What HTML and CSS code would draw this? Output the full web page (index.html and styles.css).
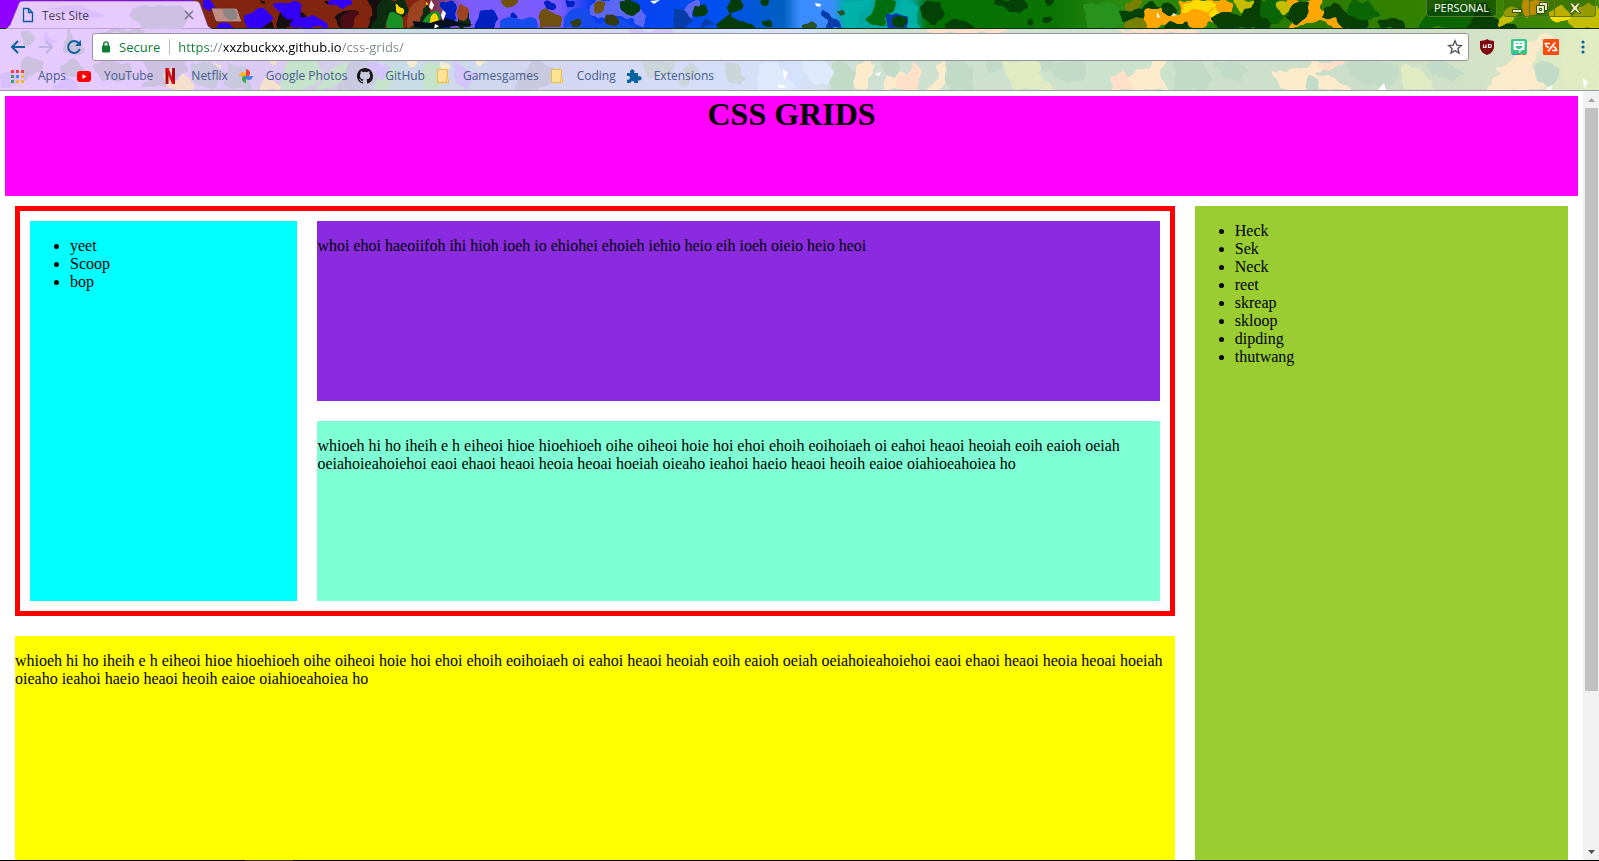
FILE: index.html
```
<!DOCTYPE html>
<html lang="en">
<head>
<meta charset="utf-8">
<title>Test Site</title>
<link rel="stylesheet" href="styles.css">
</head>
<body>
<div class="browser">
  <header class="chrome">
    <div class="titlebar">
      <svg class="art" viewBox="0 0 1599 29" preserveAspectRatio="none" aria-hidden="true">
        <defs>
          <filter id="splat" x="-5%" y="-20%" width="110%" height="140%" color-interpolation-filters="sRGB">
            <feTurbulence type="fractalNoise" baseFrequency="0.09" numOctaves="2" seed="4" result="noise"/>
            <feDisplacementMap in="SourceGraphic" in2="noise" scale="9" xChannelSelector="R" yChannelSelector="G"/>
            <feGaussianBlur stdDeviation="1.2"/>
            <feComponentTransfer><feFuncA type="linear" slope="5" intercept="-2"/></feComponentTransfer>
          </filter>
          <linearGradient id="sky"><stop offset="0" stop-color="#8f00ff"/><stop offset="0.12" stop-color="#8f00ff"/><stop offset="0.121" stop-color="#82250f"/><stop offset="0.265" stop-color="#82250f"/><stop offset="0.29" stop-color="#7a5cff"/><stop offset="0.35" stop-color="#7a5cff"/><stop offset="0.37" stop-color="#0a3cf0"/><stop offset="0.45" stop-color="#0050f0"/><stop offset="0.49" stop-color="#0060c0"/><stop offset="0.5" stop-color="#3b8cff"/><stop offset="0.52" stop-color="#3b8cff"/><stop offset="0.53" stop-color="#00a8a0"/><stop offset="0.57" stop-color="#00a8a0"/><stop offset="0.58" stop-color="#037003"/><stop offset="0.66" stop-color="#0b7503"/><stop offset="0.7" stop-color="#2c8a10"/><stop offset="0.8" stop-color="#2a7a00"/><stop offset="1" stop-color="#3f8a00"/></linearGradient>
        </defs>
        <rect width="1599" height="29" fill="url(#sky)"/>
        <g fill="#16100e">
          <path d="M257 0q8 0 9 4-4 3-9-4zM262 20q4 2 12 3 0 6-2 6h-8zM277 24q0-12 20-14 10 0 12 8l-9 11h-22zM337 13q8-4 24-2l-4 6q-10 0-8 12h-9q-4-8-3-16zM322 0h20v5q-12 4-20-5zM366 0h28l3 9-8 4-6 16h-16l4-14z"/>
        </g>
        <g fill="#3200f5">
          <path d="M203 0h8l5 6-6 6-6-5zM246 14q12-6 20-4l8 8-6 6-10 5h-12q-2-8 0-15zM273 4q8-2 18-1 8-3 10 4l-1 10-14 1-9-7zM327 0h22l5 4-10 4-14-2zM288 29q4-12 16-14 22 0 24 14zM216 25l8-3 10 7h-16z"/>
        </g>
        <g fill="#4a0d16"><path d="M341 17q8-8 18-6l2 6q-8 0-9 12h-9q-4-6-2-12z"/></g>
        <g fill="#0d2d10"><path d="M377 6q6-8 14-6h13l5 9-8 9-15-1-2 12h-16l8-9zM404 29l6-13 16-12 7 25zM459 15l10-4 3 18h-12z"/></g>
        <g fill="#199024"><path d="M385 20q3-12 12-7l7 16h-18zM426 13l14-2-4 18h-13z"/></g>
        <g fill="#ffd300"><path d="M397 2l6 6-3 9-3-5zM429 15l7-1 2 9-6 3zM423 0h4l3 7-6-3z"/></g>
        <g fill="#9d4320"><path d="M407 11l11-11h10l-5 9-5 18-12 2zM459 4l11 4-4 13-8-5z"/></g>
        <g fill="#0020c0"><path d="M442 4l10-4 5 12-7 17h-10l5-15zM480 11l10-2 8 9-6 12h-18zM544 4l4-4 7 2 1 7-10 1zM565 0h10l-2 8-8-1zM510 12q8-3 8 5-5 8-10 3z"/></g>
        <g fill="#174cec"><path d="M500 29q-2-18 10-14l12 6 14-4v12zM565 17q14-15 27-3l9 15h-38zM595 29q10-15 32-8l12 8z"/></g>
        <g fill="#5b68f5"><path d="M595 0h33l8 10 14 5-10 14-8-11-16-3-18 5-8-10zM684 8l15-8 2 6-8 7-8 15z"/></g>
        <g fill="#70500f"><path d="M501 0h19q-3 8-11 8-7-1-8-8zM540 9q8-1 13 4l9 4-1 12h-22q-2-8 1-20zM594 2l12-2-3 12-7 2z"/></g>
        <g fill="#353c14"><path d="M606 15l8-2q5 3 3 12l-6 2-7-6zM569 22l12-3-2 6-8 4z"/></g>
        <g fill="#053c0b"><path d="M619 3l8-3 10 3q4 12-4 13l-14-7zM695 9l10-4q4 6 0 11l-12 1zM729 0h13q4 14-11 12l1 9q22-1 24 8h-36l-5-5 14-10-4-7zM762 0h7q1 8-6 8zM763 22l6-2 3 6-5 1z"/></g>
        <g fill="#063da8"><path d="M672 9l13-1 7 13-10 8h-10zM705 18l10 4-14 7zM822 9l14 10 7 10h-23l9-8-8-6zM886 14l17-5 6 11-1 9h-22z"/></g>
        <g fill="#295226"><path d="M802 24l8-3 8 4-3 4h-12zM835 11l7-3q6 8-1 10z"/></g>
        <g fill="#00b1a9"><path d="M841 4l14-4h18l-6 10-8 6-3 13h-11l-4-11 5-4zM904 0l15 7-2 12 4 10h-12l-3-14-13-6z"/></g>
        <g fill="#006e0e"><path d="M865 20l5-7 6-13h23l-6 8-7 9-3 11z"/></g>
        <g fill="#27921c"><path d="M1085 4l24-4 12 10 3 14-13 5h-21l-5-12z"/></g>
        <g fill="#034207"><path d="M921 6q8-7 20-1l3 8-8 12q-17-3-15-19zM894 15l8-1 6 8-6 7-9-5zM945 23l7-5 15 4 9 7h-31zM995 0h33q4 9-11 13-10 0-12-5l-10-2zM1044 0h10l-1 6-8 1zM1042 16l8-2 4 6-5 4-7-2zM1026 23l5-4 4 4-3 4zM1117 11l24-1 9-10 14 8-9 13-14 4-20-4z"/></g>
        <g fill="#788000"><path d="M1126 3l6-3h12l-6 11-12-1zM1124 20l22-3 8 12h-30z"/></g>
        <g fill="#ffa600"><path d="M1144 10l17-4 9 8 14 1-6 14-15-5-17 5zM1178 0h44l12 6-9 14-18 2-7 7-22-7 4-9zM1287 0h37l-4 10 17 4 6 9 9 6h-16l-12-9-21 5-14 2 5-13-9-9zM1522 0h28l-10 12-16 5z"/></g>
        <g fill="#ffdc00"><path d="M1183 3l21-3 13 5-11 7-12-4-10 6zM1209 14l7-6 5 8-7 5zM1547 11l15-7 10 13-16 6z"/></g>
        <g fill="#083f04"><path d="M1161 6l7-3 10 8-7 5-8-4zM1168 21l10 3 9-2 5 7h-30zM1211 19l10-7 17 3 10-8-8-7h35l2 14-10 15h-46zM1291 7l9-7h8l-1 17-10 8-12-8zM1325 10l12-6 15 14 10-9 9 13-7 7h-20l-9-11-14-1zM1377 21l19-4 9 7-2 5h-24zM1473 5l14-5 6 18 14 4 13 7h-55z"/></g>
        <g fill="#0a6504"><path d="M1260 0h18l12 13-12 12-15-6zM1352 0h17l10 15-18 7-14-7zM1427 11l25-11 22 11-7 18h-49z"/></g>
        <g fill="#c4bd00"><path d="M1276 4l7-4 7 10-8 7zM1231 0l9 12 10-5 5-7zM1498 17l14-12 8 3-7 13-14 8zM1566 20l21-18 12 2v25h-22z"/></g>
        <path d="M413 21l17 2 16-5 12 4 16 3-20 1-20 3-20-2z" fill="#08101f"/>
        <path d="M431 0l3 5-2 5-3-3zM443 10l3 3-3 8-2-6zM435 24l4 2-5 3zM815 3l6 1-1 3-4-1zM1157 12l3 5-3 1zM1173 13l4 2-5 1zM650 1l10-1-6 4z" fill="#fff"/>
        <path d="M0 28.500h1599" stroke="#10301c"/>
      </svg>
      <svg class="tab-shape" width="206" height="29" viewBox="0 0 206 29" aria-hidden="true"><path d="M0 29L4 25 13 3q1-2 4-2h173q3 0 4 3l8 22 4 3z" fill="#e7cbff" stroke="#6a3c94" stroke-opacity=".6"/><path d="M126 10q6-5 14-5 6 3 12 0 12 2 22 0 10 6 8 15l-6 9h-40q-2-8-10-10-4-4 0-9z" fill="#cdc0e2"/><path d="M42 9q20-5 34-3 14 6 24 10-10 3-18 2z" fill="#dcbfff"/></svg>
      <div class="tab">
        <svg width="16" height="16" viewBox="0 0 16 16" aria-hidden="true"><path d="M3.500 1.500h5l4 4v9h-9zM8.500 1.500v4h4" fill="none" stroke="#0b5c96" stroke-width="1.300"/></svg>
        <span class="tab-title">Test Site</span>
        <button class="tab-close" aria-label="Close tab"><svg width="10" height="10" viewBox="0 0 10 10"><path d="M1 1l8 8M9 1L1 9" stroke="#77708a" stroke-width="1.600"/></svg></button>
      </div>
      <button class="new-tab" aria-label="New tab"><svg width="34" height="17" viewBox="0 0 34 17"><path d="M1 1h24q2 0 3 2l4 12H8q-2 0-3-2z" fill="#bf8c86" stroke="#6b2415"/><path d="M13 2h11q4 4 3 9-5 4-9 1-6-4-5-10z" fill="#8c8583"/></svg></button>
      <div class="window-tools">
        <button class="profile">PERSONAL</button>
        <div class="window-buttons">
          <button aria-label="Minimize"><svg width="12" height="14" viewBox="0 0 12 14"><path d="M1.500 8.500h9v3h-9z" fill="#e4eec0" stroke="#384e16"/></svg></button>
          <button aria-label="Restore"><svg width="14" height="14" viewBox="0 0 14 14"><path d="M4.500 1.500h8v8h-3v3h-8v-8h3z" fill="#dfe9b7" stroke="#384e16"/><path d="M4.500 4.500h5v5M4.500 7.500h2v2h-2z" fill="none" stroke="#384e16"/></svg></button>
          <button class="wide" aria-label="Close"><svg width="14" height="14" viewBox="0 0 14 14"><path d="M1.500 2h3L7 5l2.500-3h3L9 7l3.500 5h-3L7 9l-2.500 3h-3L5 7z" fill="#eff3c4" stroke="#4a5a16"/></svg></button>
        </div>
      </div>
    </div>

    <div class="toolbar">
      <svg class="art" viewBox="0 29 1599 62" preserveAspectRatio="none" aria-hidden="true">
        <defs><linearGradient id="haze"><stop offset="0" stop-color="#e7cbff"/><stop offset="0.11" stop-color="#e2caff"/><stop offset="0.2" stop-color="#d6ccea"/><stop offset="0.25" stop-color="#c8dde6"/><stop offset="0.33" stop-color="#d4d5f2"/><stop offset="0.5" stop-color="#d5e2fb"/><stop offset="0.53" stop-color="#cfe1d4"/><stop offset="0.7" stop-color="#cde2cb"/><stop offset="0.85" stop-color="#cbdec8"/><stop offset="0.94" stop-color="#d5e3c6"/><stop offset="1" stop-color="#e2efc4"/></linearGradient></defs>
        <rect y="29" width="1599" height="62" fill="url(#haze)"/>
        <g fill="#cdc1e0"><path d="M20 31q10-4 14 6-1 12-10 9zM70 29q4 14 9 11l5 9-8 8-13-6 2-16zM25 58l20 2-4 11-14 9-9-9zM60 66l13-6 12 8-7 10-15-2zM93 65l15-4 22 4 3 13-17 7-15-5zM141 60h42l6 12-12 7-5 9h-32l11-11zM100 31l33-2 18 4H99z"/></g>
        <g fill="#dabfff"><path d="M0 74l15-2 6 9-12 8H0zM44 29l14 12-10 5zM57 84l12-7 13 13H50z"/></g>
        <g fill="#f5e1cb"><path d="M162 77l10-8 8 21h-12zM180 76l9 2 5 13h-20zM266 78l12 3 5 10h-25zM213 61l10 5-7 4zM267 60l12 2-5 5z"/></g>
        <g fill="#c9c9df"><path d="M190 62l28 2 7 12-11 15-20-7zM226 64l22 4 5 22h-28zM350 62h28l7 15-17 14h-32zM532 61l20 6 8 12-23 12h-25z"/></g>
        <g fill="#c5e3cb"><path d="M287 60h30l6 16-17 15h-25zM334 66l18-6-9 20-15 11h-13zM386 63l13 9-13 19h-13zM428 61l17 4-5 26h-14l-8-12z"/></g>
        <g fill="#f6ecd1"><path d="M406 60l11 1-7 8zM440 60l10 7-8 6zM471 61h15l-6 7z"/></g>
        <g fill="#d3c4fa"><path d="M300 29h24l8 7h-24zM372 61l20 7-7 12-20-9zM453 61l26 16-12 14-12-10zM630 30h42l8 4h-50z"/></g>
        <g fill="#ccd5da"><path d="M641 61h34l-6 16-12-2-9 5zM725 65q7-6 14 2l6 15-13 3q-10-8-7-20zM680 69l11-5 10 8-10 9zM677 81l11-4 3 8-9 6z"/></g>
        <g fill="#dfe9fd"><path d="M760 65h20l15 26h-37zM805 61h20l9 13-4 13-15-3-14-13z"/></g>
        <g fill="#fbebcb"><path d="M856 67l12-6 7 5-8 24h-12zM886 74l15-3 12 14-6 6h-21zM934 69l12-8 1 22-8 8h-12l11-12zM1134 73l10-4 12-8h10l-5 15 7 15h-32l-9-8zM1268 70l19 2 20-4 9-7 10 6-12 8 20 4 19 12h-71l-5-10zM1488 86l13-13-7-3 20-11 17-16 15-12 7 8-14 11-8 18 17 10-5 13h-55z"/></g>
        <g fill="#ffe0c8"><path d="M897 78l12-4 5-13 6 10-3 20h-18zM1109 78l16-7 9 20h-20zM1317 65l21-5 7 3-15 9zM930 29h74l10 4h-90zM1118 29h70l18 4h-82z"/></g>
        <g fill="#c2dbc8"><path d="M832 63l11-2 12 12-2 18h-22zM880 61q16-3 21 4l-6 15-13-7zM948 62l17-1 9 11 1 19h-25q-9-14-2-29zM984 61h18l2 9-16 4zM1040 61h44l3 12-6 11-18-2-12-8-11-1zM1174 61h29l11 23-15 7h-27l3-12zM1213 64l19-3 16 8-9 14-17-5zM1307 73l12 7 2 11h-15zM1348 61h34l18 7-7 19h-25l-17-10zM1426 63l19-2 20 13-12 7-20-5zM1535 67q8-8 17-3l7 13-9 10q-15-2-15-20z"/></g>
        <g fill="#e1ebc2"><path d="M1003 61h37v14l16 16h-40l-7-9zM1401 66l17 3 15 12v10h-27zM1570 34l16 9 13-5v53h-32l-7-24z"/></g>
        <path d="M874 74l7-1-2 4zM1377 92l7-8 2 7zM1545 90l8-4-2 5zM1583 79l5 4-4 7zM783 70l5 3-4 8zM778 85l9 3-8 2z" fill="#fff"/>
      </svg>
      <nav class="nav-row" aria-label="Browser navigation">
        <div class="nav-buttons">
          <button aria-label="Back"><svg width="16" height="16" viewBox="0 0 16 16"><path d="M15 8H2.500M8 2L2 8l6 6" fill="none" stroke="#0a639f" stroke-width="2"/></svg></button>
          <button aria-label="Forward"><svg width="16" height="16" viewBox="0 0 16 16"><path d="M1 8h12.500M8 2l6 6-6 6" fill="none" stroke="#bdb4e6" stroke-width="2"/></svg></button>
          <button aria-label="Reload"><svg width="16" height="16" viewBox="0 0 16 16"><path d="M12.800 4.200A6 6 0 1 0 13.800 10" fill="none" stroke="#0a639f" stroke-width="2"/><path d="M15 1v6H9z" fill="#0a639f"/></svg></button>
        </div>
        <div class="omnibox">
          <svg width="10" height="12" viewBox="0 0 10 12" aria-hidden="true"><path d="M2.700 5V3.200a2.300 2.300 0 0 1 4.600 0V5" fill="none" stroke="#0f7c35" stroke-width="1.400"/><rect x="1" y="4.500" width="8" height="7" rx="1" fill="#0f7c35"/></svg>
          <label class="secure" for="url">Secure</label>
          <input class="url" id="url" type="text" value="https://xxzbuckxx.github.io/css-grids/" spellcheck="false">
          <button aria-label="Bookmark this page"><svg width="16" height="16" viewBox="0 0 16 16"><path d="M8 1.800l1.800 4.300 4.600.4-3.500 3 1.100 4.500L8 11.600 4 14l1.100-4.500-3.500-3 4.600-.4z" fill="none" stroke="#58585b" stroke-width="1.400"/></svg></button>
        </div>
        <div class="extensions">
          <button aria-label="uBlock"><svg width="16" height="16" viewBox="0 0 16 16"><path d="M8 0l2 1.300 5 .7v6q0 5-7 8-7-3-7-8V2l5-.700z" fill="#800610"/><path d="M4.500 5.500v3h2.500v-3M9.500 5.500h1.800q1 0 1 1.500t-1 1.500H9.500z" fill="none" stroke="#fff" stroke-width="1.200"/></svg></button>
          <button aria-label="Bitmoji"><svg width="16" height="16" viewBox="0 0 16 16"><rect width="16" height="16" rx="2" fill="#35c88c"/><path d="M3.500 2h9q1 0 1 1v7q0 1-1 1H11l-3 3v-3H3.500q-1 0-1-1V3q0-1 1-1z" fill="#fff"/><path d="M5 4.500h2M9 4.500h2" stroke="#35c88c"/><path d="M4.500 7h7q-.500 3-3.500 3T4.500 7z" fill="#35c88c"/><path d="M2 15.500h4" stroke="#4184f3"/><path d="M6 15.500h2M12 15.500h2" stroke="#e94435"/><path d="M10 15.500h2" stroke="#f7b529"/></svg></button>
          <button aria-label="Zapier"><svg width="16" height="16" viewBox="0 0 16 16"><rect width="16" height="16" rx="1" fill="#ff4a0c"/><path d="M7 4.500H2.500q.200 3.500 3.500 4M12 3.500L5 12.500M9 11.500h4.500q-.200-3-3-3.800" fill="none" stroke="#fff" stroke-width="1.700"/></svg></button>
          <button class="menu" aria-label="Menu"><svg width="4" height="14" viewBox="0 0 4 14"><g fill="#0a639f"><circle cx="2" cy="2" r="1.600"/><circle cx="2" cy="7" r="1.600"/><circle cx="2" cy="12" r="1.600"/></g></svg></button>
        </div>
      </nav>
      <nav class="bookmarks" aria-label="Bookmarks">
        <a href="#"><svg width="16" height="16" viewBox="0 0 16 16"><path d="M1 3.500h3M6 3.500h3M11 3.500h3" stroke="#ea4535" stroke-width="3"/><path d="M1 8.500h3" stroke="#38a556" stroke-width="3"/><path d="M6 8.500h3" stroke="#4688f1" stroke-width="3"/><path d="M11 8.500h3" stroke="#f6b828" stroke-width="3"/><path d="M1 13.500h3" stroke="#38a556" stroke-width="3"/><path d="M6 13.500h3M11 13.500h3" stroke="#f6b828" stroke-width="3"/></svg>Apps</a>
        <a href="#"><svg width="16" height="16" viewBox="0 0 16 16"><rect x="1" y="3" width="14" height="11" rx="3" fill="#f00"/><path d="M6.500 6v5l4-2.500z" fill="#fff"/></svg>YouTube</a>
        <a href="#"><svg width="16" height="16" viewBox="0 0 16 16"><path d="M2.500 0h3v16l-3 .500zM9 0h3v16.500L9 16z" fill="#a90912"/><path d="M2.500 0h3L12 16.500 9 16z" fill="#e50914"/></svg>Netflix</a>
        <a href="#"><svg width="16" height="16" viewBox="0 0 16 16"><path d="M8 8V1q4 1 4 4 0 2-1 3z" fill="#e94435"/><path d="M8 8h7q-1 4-4 4-2 0-3-1z" fill="#4184f3"/><path d="M8 8v7q-4-1-4-4 0-2 1-3z" fill="#3da757"/><path d="M8 8H1q1-4 4-4 2 0 3 1z" fill="#f7b529"/></svg>Google Photos</a>
        <a href="#"><svg width="16" height="16" viewBox="0 0 16 16"><path fill="#171515" d="M8 0C3.580 0 0 3.580 0 8c0 3.540 2.290 6.530 5.470 7.590.4.070.55-.17.55-.38v-1.490c-2.010.37-2.530-.49-2.690-.94-.09-.23-.48-.94-.82-1.130-.28-.15-.68-.52-.01-.53.63-.01 1.080.58 1.230.82.72 1.210 1.870.87 2.330.66.070-.52.280-.87.510-1.070-1.780-.2-3.640-.89-3.640-3.950 0-.87.310-1.590.82-2.150-.08-.2-.36-1.020.08-2.120 0 0 .67-.21 2.200.82a7.600 7.600 0 0 1 4 0c1.530-1.040 2.200-.82 2.200-.82.44 1.100.16 1.920.08 2.120.51.560.82 1.270.82 2.150 0 3.070-1.870 3.750-3.650 3.950.29.250.54.730.54 1.480v2.200c0 .21.150.46.550.38A8 8 0 0 0 16 8c0-4.420-3.580-8-8-8z"/></svg>GitHub</a>
        <a href="#"><svg width="16" height="16" viewBox="0 0 16 16"><path d="M2.500 1.500h10v9l1 1v3h-11z" fill="#ffe495" stroke="#eac13b"/><path d="M11.500 14v-3.500h1" fill="none" stroke="#eac13b"/></svg>Gamesgames</a>
        <a href="#"><svg width="16" height="16" viewBox="0 0 16 16"><path d="M2.500 1.500h10v9l1 1v3h-11z" fill="#ffe495" stroke="#eac13b"/><path d="M11.500 14v-3.500h1" fill="none" stroke="#eac13b"/></svg>Coding</a>
        <a href="#"><svg width="16" height="16" viewBox="0 0 16 16"><path d="M1 5h3.500a2.200 2.200 0 1 1 3.500 0h4v3.500a2.200 2.200 0 1 1 0 3.500v3H8.500a2 2 0 1 0-4 0H1v-3.500a2 2 0 1 0 0-3.500z" fill="#07649e"/></svg>Extensions</a>
      </nav>
    </div>
  </header>

  <div class="viewport">
    <div class="page">
      <header class="banner"><h1>CSS GRIDS</h1></header>
      <main class="layout">
        <section class="nested">
          <ul class="box links"><li>yeet</li><li>Scoop</li><li>bop</li></ul>
          <div class="box violet"><p>whoi ehoi haeoiifoh ihi hioh ioeh io ehiohei ehoieh iehio heio eih ioeh oieio heio heoi</p></div>
          <div class="box aqua"><p>whioeh hi ho iheih e h eiheoi hioe hioehioeh oihe oiheoi hoie hoi ehoi ehoih eoihoiaeh oi eahoi heaoi heoiah eoih eaioh oeiah oeiahoieahoiehoi eaoi ehaoi heaoi heoia heoai hoeiah oieaho ieahoi haeio heaoi heoih eaioe oiahioeahoiea ho</p></div>
        </section>
        <aside class="box side">
          <ul><li>Heck</li><li>Sek</li><li>Neck</li><li>reet</li><li>skreap</li><li>skloop</li><li>dipding</li><li>thutwang</li></ul>
        </aside>
        <section class="box article"><p>whioeh hi ho iheih e h eiheoi hioe hioehioeh oihe oiheoi hoie hoi ehoi ehoih eoihoiaeh oi eahoi heaoi heoiah eoih eaioh oeiah oeiahoieahoiehoi eaoi ehaoi heaoi heoia heoai hoeiah oieaho ieahoi haeio heaoi heoih eaioe oiahioeahoiea ho</p></section>
      </main>
    </div>
    <div class="scrollbar" aria-hidden="true">
      <svg width="16" height="17" viewBox="0 0 16 17"><path d="M5 11h7L8.500 7z" fill="#a3a3a3"/></svg>
      <div class="track"><div class="thumb"></div></div>
      <svg width="16" height="17" viewBox="0 0 16 17"><path d="M5 7h7l-3.500 4z" fill="#505050"/></svg>
    </div>
  </div>
  <div class="taskbar-edge"><span></span></div>
</div>
</body>
</html>
```
FILE: styles.css
```
* { box-sizing: border-box; }

body {
  margin: 0;
  font: 16px "Liberation Serif", "Times New Roman", serif;
  color: #000;
  background: #fff;
}

button {
  display: flex;
  align-items: center;
  justify-content: center;
  padding: 0;
  border: 0;
  background: none;
  font: inherit;
  color: inherit;
}

svg { display: block; flex: none; }

.browser {
  display: flex;
  flex-direction: column;
  height: 100vh;
  overflow: hidden;
}

/* Browser frame */
.chrome { flex: none; font: 12px "Open Sans", "Noto Sans", sans-serif; }

.titlebar, .toolbar { position: relative; isolation: isolate; }

.art {
  position: absolute;
  inset: 0;
  z-index: -2;
  width: 100%;
  height: 100%;
}

.art > g { filter: url(#splat); }

.titlebar {
  display: flex;
  align-items: flex-start;
  height: 29px;
  padding: 0 3px 0 6px;
}

.tab-shape { position: absolute; left: 6px; top: 0; z-index: -1; }

.tab {
  display: flex;
  align-items: center;
  gap: 6px;
  width: 204px;
  height: 29px;
  padding: 1px 16px 0 14px;
  color: #4a4158;
}

.tab-title { flex: 1; }
.new-tab { margin-top: 7px; }

.window-tools {
  display: flex;
  gap: 6px;
  margin-left: auto;
  color: #fff;
}

.profile {
  width: 71px;
  height: 17px;
  border: 1px solid #547c2c;
  border-top: 0;
  border-radius: 0 0 4px 4px;
  background: rgba(10, 60, 0, .55);
  font-size: 11px;
  line-height: 16px;
}

.window-buttons {
  display: flex;
  height: 17px;
  border: 1px solid #5b7920;
  border-top: 0;
  border-radius: 0 0 4px 4px;
  background: rgba(60, 90, 0, .35);
}

.window-buttons button { width: 25px; }
.window-buttons button + button { border-left: 1px solid #5b7920; }
.window-buttons .wide { width: 41px; }

.toolbar { border-bottom: 1px solid #9c9da4; height: 62px; }

.nav-row {
  display: flex;
  align-items: center;
  gap: 10px;
  padding: 4px 8px 0 10px;
}

.nav-buttons { display: flex; gap: 12px; width: 72px; }

.omnibox {
  display: flex;
  align-items: center;
  flex: 1;
  height: 28px;
  padding: 0 5px 0 8px;
  border: 1px solid #98949f;
  border-radius: 3px;
  background: #fff;
  font-size: 13px;
}

.secure {
  margin-left: 8px;
  padding-right: 9px;
  border-right: 1px solid #bdbdbd;
  line-height: 16px;
  color: #0f7c35;
}

.url {
  flex: 1;
  min-width: 0;
  padding: 0 0 0 8px;
  border: 0;
  outline: 0;
  font: inherit;
  color: transparent;
  background: linear-gradient(to right, #0f7c35 41px, #80868b 41px 54px, #000 54px 171px, #80868b 171px) text;
}

.extensions { display: flex; gap: 16px; }
.extensions .menu { width: 16px; }

.bookmarks {
  display: flex;
  gap: 10px;
  padding: 5px 10px 0;
}

.bookmarks a {
  display: flex;
  align-items: center;
  gap: 12px;
  line-height: 20px;
  color: #44608b;
  text-decoration: none;
  white-space: nowrap;
}

/* Page content */
.viewport { display: flex; flex: 1; min-height: 0; }

.page { flex: 1; min-width: 0; padding: 5px; overflow: hidden; }

.banner { height: 100px; background: magenta; text-align: center; }
.banner h1 { margin: 0; font-size: 32px; }

.layout { display: grid; grid-template-columns: 3fr 1fr; }

.nested {
  display: grid;
  grid-template-columns: 1fr 3fr;
  grid-template-rows: 200px 200px;
  margin: 10px;
  border: 5px solid red;
}

.box { margin: 10px; }
.links { grid-row: span 2; padding: 16px 0 16px 40px; background: cyan; }
.violet { background: blueviolet; }
.aqua { background: aquamarine; }
.side { grid-row: span 2; background: yellowgreen; }
.article { min-height: 400px; background: yellow; }

.scrollbar {
  display: flex;
  flex-direction: column;
  width: 16px;
  background: #f1f1f1;
}

.track { flex: 1; padding: 0 1px 0 2px; }
.thumb { height: 79.3%; background: #c1c1c1; }

.taskbar-edge { flex: none; height: 1px; padding-left: 245px; background: #000; }
.taskbar-edge span { display: block; width: 48px; height: 1px; background: #333038; }
```
